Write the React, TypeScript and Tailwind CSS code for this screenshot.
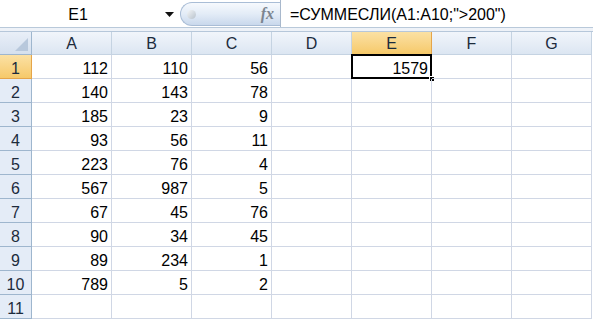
import React from "react";

const cols = ["A", "B", "C", "D", "E", "F", "G"];

const data: (number | null)[][] = [
  [112, 110, 56],
  [140, 143, 78],
  [185, 23, 9],
  [93, 56, 11],
  [223, 76, 4],
  [567, 987, 5],
  [67, 45, 76],
  [90, 34, 45],
  [89, 234, 1],
  [789, 5, 2],
  [null, null, null],
];

const font = { fontFamily: '"Liberation Sans", Arial, sans-serif' };

function FormulaBar() {
  return (
    <div className="flex h-[28px] bg-white border-b border-[#b9c9da]">
      <div className="w-[180px] flex items-center relative">
        <span className="w-[156px] text-center text-[16px] leading-none pt-[2px] text-black">E1</span>
        <svg width="9" height="6" viewBox="0 0 9 6" className="absolute left-[165px] top-[12px]">
          <path d="M0 0 L9 0 L4.5 5 Z" fill="#111" />
        </svg>
      </div>
      <div className="w-[100px] h-[24px] mt-[2px] rounded-l-full border border-r-0 border-[#a9bdd6] bg-gradient-to-b from-[#f6f9fd] via-[#e3ecf7] to-[#c9d8ec] flex items-center justify-between pl-[6px] pr-[6px]">
        <span className="w-[9px] h-[9px] rounded-full bg-gradient-to-br from-[#f4f6f8] to-[#b8c2cc]" />
        <span className="text-[16px] italic text-[#7c8590] font-bold" style={{ fontFamily: '"Liberation Serif", serif' }}>
          fx
        </span>
      </div>
      <div className="w-px bg-[#a8b8cc]" />
      <div className="flex-1 flex items-center pl-[9px] pt-[2px] text-[16px] leading-none text-black">
        =СУММЕСЛИ(A1:A10;"&gt;200")
      </div>
    </div>
  );
}

export default function App() {
  return (
    <div className="w-[593px] h-[321px] overflow-hidden bg-white" style={font}>
      <FormulaBar />
      <div className="h-[3px] bg-[#eef2f8]" />
      <div className="grid grid-cols-[32px_repeat(7,80px)_1px] border-t border-[#b6c7da]">
        {/* corner */}
        <div className="h-[23px] relative bg-gradient-to-b from-[#e9eff8] to-[#d5e0ee] border-r border-b border-[#9eb6ce]">
          <svg width="13" height="13" viewBox="0 0 13 13" className="absolute right-[3px] bottom-[3px]">
            <path d="M13 0 L13 13 L0 13 Z" fill="#b8c8dc" />
          </svg>
        </div>
        {cols.map((c) =>
          c === "E" ? (
            <div
              key={c}
              className="h-[23px] flex items-end justify-center pb-[2px] text-[16px] leading-none text-[#1c2b3c] bg-gradient-to-b from-[#fbe1a4] to-[#f6c969] border-r border-b border-[#e5a54a]"
            >
              {c}
            </div>
          ) : (
            <div
              key={c}
              className="h-[23px] flex items-end justify-center pb-[2px] text-[16px] leading-none text-[#1c2b3c] bg-gradient-to-b from-[#f1f5fb] to-[#dce6f2] border-r border-b border-[#c5d3e2]"
            >
              {c}
            </div>
          )
        )}
        <div className="bg-white" />
        {data.map((row, r) => (
          <React.Fragment key={r}>
            <div
              className={
                r === 0
                  ? "h-[24px] flex items-end justify-center pb-[1px] text-[16px] leading-none text-[#1c2b3c] bg-gradient-to-b from-[#fbe1a4] to-[#f6c969] border-r border-b border-[#e5a54a]"
                  : "h-[24px] flex items-end justify-center pb-[1px] text-[16px] leading-none text-[#1c2b3c] bg-[#e4ecf7] border-r border-b border-[#9eb6ce]"
              }
            >
              {r + 1}
            </div>
            {cols.map((c, ci) => {
              const v = ci < 3 ? row[ci] : c === "E" && r === 0 ? 1579 : null;
              const selected = c === "E" && r === 0;
              return (
                <div
                  key={c}
                  className="h-[24px] relative flex items-end justify-end pr-[3px] pb-[1px] text-[16px] leading-none text-black border-r border-b border-[#d0d7e5]"
                >
                  {v !== null ? v : ""}
                  {selected && (
                    <>
                      <div className="absolute left-[-1px] top-[-1px] right-[-1px] bottom-[-1px] border-2 border-black" />
                      <div className="absolute right-[-4px] bottom-[-4px] w-[6px] h-[6px] bg-black border border-white" />
                    </>
                  )}
                </div>
              );
            })}
            <div className="bg-white" />
          </React.Fragment>
        ))}
      </div>
    </div>
  );
}
